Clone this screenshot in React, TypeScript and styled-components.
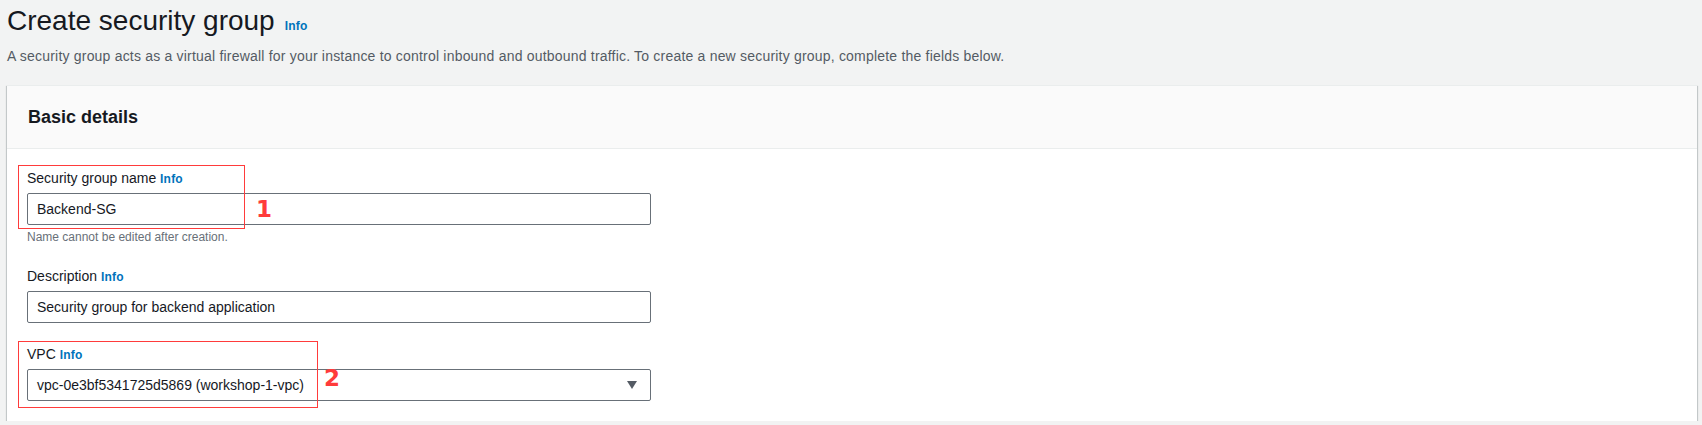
import React from "react";
import styled, { createGlobalStyle } from "styled-components";

const GlobalStyle = createGlobalStyle`
  body {
    margin: 0;
    background-color: #f2f3f3;
    font-family: "Liberation Sans", Arial, sans-serif;
    color: #16191f;
  }
`;

const Page = styled.div`
  padding: 3px 5px 0 7px;
`;

const PageHeader = styled.div`
  display: flex;
  flex-direction: column;
`;

const TitleRow = styled.div`
  display: flex;
  align-items: baseline;
  gap: 10px;
`;

const Title = styled.h1`
  margin: 0;
  font-size: 28px;
  line-height: 36px;
  font-weight: 400;
  color: #16191f;
`;

const InfoLink = styled.a`
  font-size: 12px;
  font-weight: 700;
  color: #0073bb;
  text-decoration: none;
  letter-spacing: 0.2px;
`;

const Subtitle = styled.p`
  margin: 6px 0 0;
  font-size: 14px;
  line-height: 22px;
  letter-spacing: 0.2px;
  color: #545b64;
`;

const Panel = styled.section`
  margin-top: 18px;
  background-color: #ffffff;
  border-top: 1px solid #eaeded;
  box-shadow: 0 1px 1px 0 rgba(0, 28, 36, 0.3), 1px 1px 1px 0 rgba(0, 28, 36, 0.15),
    -1px 1px 1px 0 rgba(0, 28, 36, 0.15);
`;

const PanelHeader = styled.div`
  height: 62px;
  display: flex;
  align-items: center;
  padding: 0 21px;
  background-color: #fafafa;
  border-bottom: 1px solid #eaeded;
`;

const PanelTitle = styled.h2`
  margin: 0;
  font-size: 18px;
  line-height: 22px;
  font-weight: 700;
  color: #16191f;
`;

const PanelBody = styled.div`
  display: flex;
  flex-direction: column;
  gap: 20px;
  padding: 18px 20px 20px;
`;

const Field = styled.div`
  position: relative;
  display: flex;
  flex-direction: column;
  width: 624px;
`;

const Label = styled.label`
  font-size: 14px;
  line-height: 22px;
  color: #16191f;
  margin-bottom: 3px;
`;

const Input = styled.div`
  box-sizing: border-box;
  height: 32px;
  border: 1px solid #687078;
  border-radius: 2px;
  background-color: #ffffff;
  padding: 0 9px;
  display: flex;
  align-items: center;
  justify-content: space-between;
  font-size: 14px;
  color: #16191f;
`;

const Caret = styled.span`
  width: 0;
  height: 0;
  border-left: 5px solid transparent;
  border-right: 5px solid transparent;
  border-top: 8px solid #545b64;
  margin-right: 4px;
`;

const Hint = styled.div`
  font-size: 12px;
  line-height: 16px;
  color: #687078;
  margin-top: 4px;
`;

const Highlight = styled.div<{ $top: number; $left: number; $width: number; $height: number }>`
  position: absolute;
  top: ${(p) => p.$top}px;
  left: ${(p) => p.$left}px;
  width: ${(p) => p.$width}px;
  height: ${(p) => p.$height}px;
  border: 1px solid #ff3b3b;
  box-sizing: border-box;
  pointer-events: none;
`;

const Marker = styled.span<{ $top: number; $left: number }>`
  position: absolute;
  top: ${(p) => p.$top}px;
  left: ${(p) => p.$left}px;
  font-family: "DejaVu Sans", sans-serif;
  font-size: 23px;
  line-height: 24px;
  font-weight: 700;
  color: #ff3b3b;
`;

export default function App() {
  return (
    <>
      <GlobalStyle />
      <Page>
        <PageHeader>
          <TitleRow>
            <Title>Create security group</Title>
            <InfoLink href="#">Info</InfoLink>
          </TitleRow>
          <Subtitle>
            A security group acts as a virtual firewall for your instance to control inbound and
            outbound traffic. To create a new security group, complete the fields below.
          </Subtitle>
        </PageHeader>
        <Panel>
          <PanelHeader>
            <PanelTitle>Basic details</PanelTitle>
          </PanelHeader>
          <PanelBody>
            <Field>
              <Label>
                Security group name <InfoLink href="#">Info</InfoLink>
              </Label>
              <Input>Backend-SG</Input>
              <Hint>Name cannot be edited after creation.</Hint>
              <Highlight $top={-2} $left={-9} $width={227} $height={64} />
              <Marker $top={30} $left={229}>1</Marker>
            </Field>
            <Field>
              <Label>
                Description <InfoLink href="#">Info</InfoLink>
              </Label>
              <Input>Security group for backend application</Input>
            </Field>
            <Field>
              <Label>
                VPC <InfoLink href="#">Info</InfoLink>
              </Label>
              <Input>
                vpc-0e3bf5341725d5869 (workshop-1-vpc)
                <Caret />
              </Input>
              <Highlight $top={-2} $left={-9} $width={300} $height={67} />
              <Marker $top={23} $left={297}>2</Marker>
            </Field>
          </PanelBody>
        </Panel>
      </Page>
    </>
  );
}
